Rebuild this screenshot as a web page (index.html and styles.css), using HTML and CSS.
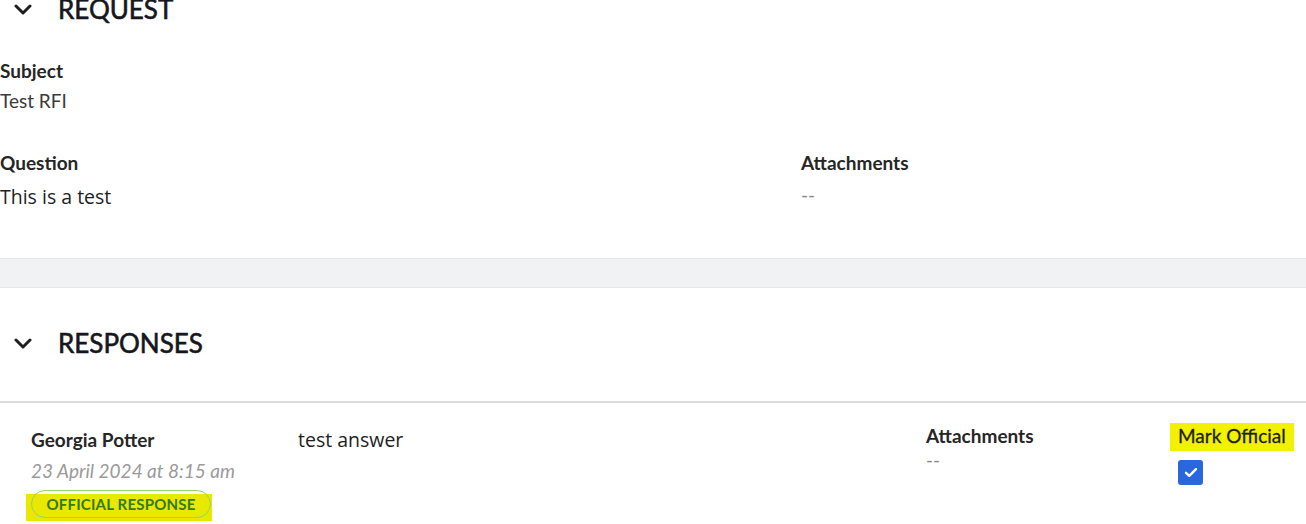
FILE: index.html
```html
<!DOCTYPE html>
<html lang="en">
<head>
<meta charset="utf-8">
<title>RFI</title>
<link rel="stylesheet" href="styles.css">
</head>
<body>
<main class="page">
  <section class="request">
    <div class="section-head">
      <svg class="chevron" width="18" height="11" viewBox="0 0 18 11"><polyline points="2,2 9,9 16,2" fill="none" stroke="currentColor" stroke-width="3" stroke-linecap="round" stroke-linejoin="round"/></svg>
      <h2 class="section-title">REQUEST</h2>
    </div>
    <div class="field subject">
      <div class="label">Subject</div>
      <div class="value">Test RFI</div>
    </div>
    <div class="request-grid">
      <div class="field">
        <div class="label">Question</div>
        <div class="rich">This is a test</div>
      </div>
      <div class="field">
        <div class="label">Attachments</div>
        <div class="empty">--</div>
      </div>
    </div>
  </section>
  <div class="band"></div>
  <section class="responses">
    <div class="section-head">
      <svg class="chevron" width="18" height="11" viewBox="0 0 18 11"><polyline points="2,2 9,9 16,2" fill="none" stroke="currentColor" stroke-width="3" stroke-linecap="round" stroke-linejoin="round"/></svg>
      <h2 class="section-title">RESPONSES</h2>
    </div>
    <div class="divider"></div>
    <div class="response">
      <div class="col author">
        <div class="label">Georgia Potter</div>
        <div class="date">23 April 2024 at 8:15 am</div>
        <div class="hl-badge"><span class="badge">OFFICIAL RESPONSE</span></div>
      </div>
      <div class="col answer">
        <div class="rich">test answer</div>
      </div>
      <div class="col attach">
        <div class="label">Attachments</div>
        <div class="empty">--</div>
      </div>
      <div class="col official">
        <div class="hl-text">Mark Official</div>
        <div class="checkbox">
          <svg width="14" height="11" viewBox="0 0 14 11"><polyline points="2,5.8 5.3,8.8 12,2.2" fill="none" stroke="#fff" stroke-width="2.4" stroke-linecap="round" stroke-linejoin="round"/></svg>
        </div>
      </div>
    </div>
  </section>
</main>
</body>
</html>
```
FILE: styles.css
```css
html, body {
  margin: 0;
  padding: 0;
  background: #ffffff;
}
body {
  font-family: "Lato", "Liberation Sans", sans-serif;
  color: #2a2a2a;
  overflow: hidden;
}
.page {
  margin-top: -7px;
}
.section-head {
  display: flex;
  align-items: center;
  gap: 26px;
  padding-left: 14px;
  height: 32px;
}
.chevron {
  color: #1f1f1f;
  display: block;
}
.section-title {
  margin: 0;
  font-size: 26px;
  line-height: 32px;
  font-weight: 400;
  color: #16161d;
  -webkit-text-stroke: 0.6px #16161d;
}
.label {
  font-size: 19px;
  line-height: 24px;
  font-weight: 700;
  color: #262626;
}
.value {
  font-size: 19px;
  line-height: 24px;
  color: #3a3a3a;
  margin-top: 6px;
}
.rich {
  font-family: "Open Sans", "Noto Sans", sans-serif;
  font-size: 19.5px;
  line-height: 26px;
  color: #1e1e24;
}
.empty {
  font-size: 19px;
  line-height: 24px;
  color: #8a8a8a;
}
.subject {
  margin-top: 34px;
}
.request-grid {
  display: grid;
  grid-template-columns: 801px 1fr;
  margin-top: 38px;
}
.request-grid .rich {
  margin-top: 9px;
}
.request-grid .empty {
  margin-top: 8px;
}
.band {
  margin-top: 48px;
  height: 28px;
  background: #f1f2f4;
  border-top: 1px solid #e5e6e9;
  border-bottom: 1px solid #e5e6e9;
}
.responses .section-head {
  margin-top: 39px;
}
.divider {
  margin-top: 42px;
  height: 2px;
  background: #dcdcdc;
}
.response {
  display: grid;
  grid-template-columns: 267px 628px 244px 1fr;
  padding: 21px 0 0 31px;
  align-items: start;
}
.author {
  margin-top: 4px;
}
.date {
  margin-top: 7px;
  font-size: 19px;
  line-height: 24px;
  font-style: italic;
  color: #9a9a9a;
}
.hl-badge {
  display: inline-block;
  margin: 11px 0 0 -5px;
  padding: 0 1px 3px 5px;
  background: #e8e800;
}
.badge {
  display: block;
  margin-top: -4px;
  width: 154px;
  padding: 4px 12px;
  border: 1px solid #95d46a;
  border-radius: 14px;
  font-size: 15px;
  line-height: 18px;
  font-weight: 700;
  color: #367a0c;
  letter-spacing: 0.2px;
  text-align: center;
}
.answer {
  margin-top: 3px;
}
.official {
  margin-top: -1px;
}
.hl-text {
  display: inline-block;
  background: #f2f200;
  padding: 1px 8px 3px 8px;
  font-size: 19px;
  line-height: 24px;
  color: #1e1e12;
  -webkit-text-stroke: 0.3px #1e1e12;
}
.checkbox {
  margin: 9px 0 0 8px;
  width: 25px;
  height: 25px;
  border-radius: 3px;
  background: #2a67dc;
  display: flex;
  align-items: center;
  justify-content: center;
}
.checkbox svg {
  display: block;
}
```
